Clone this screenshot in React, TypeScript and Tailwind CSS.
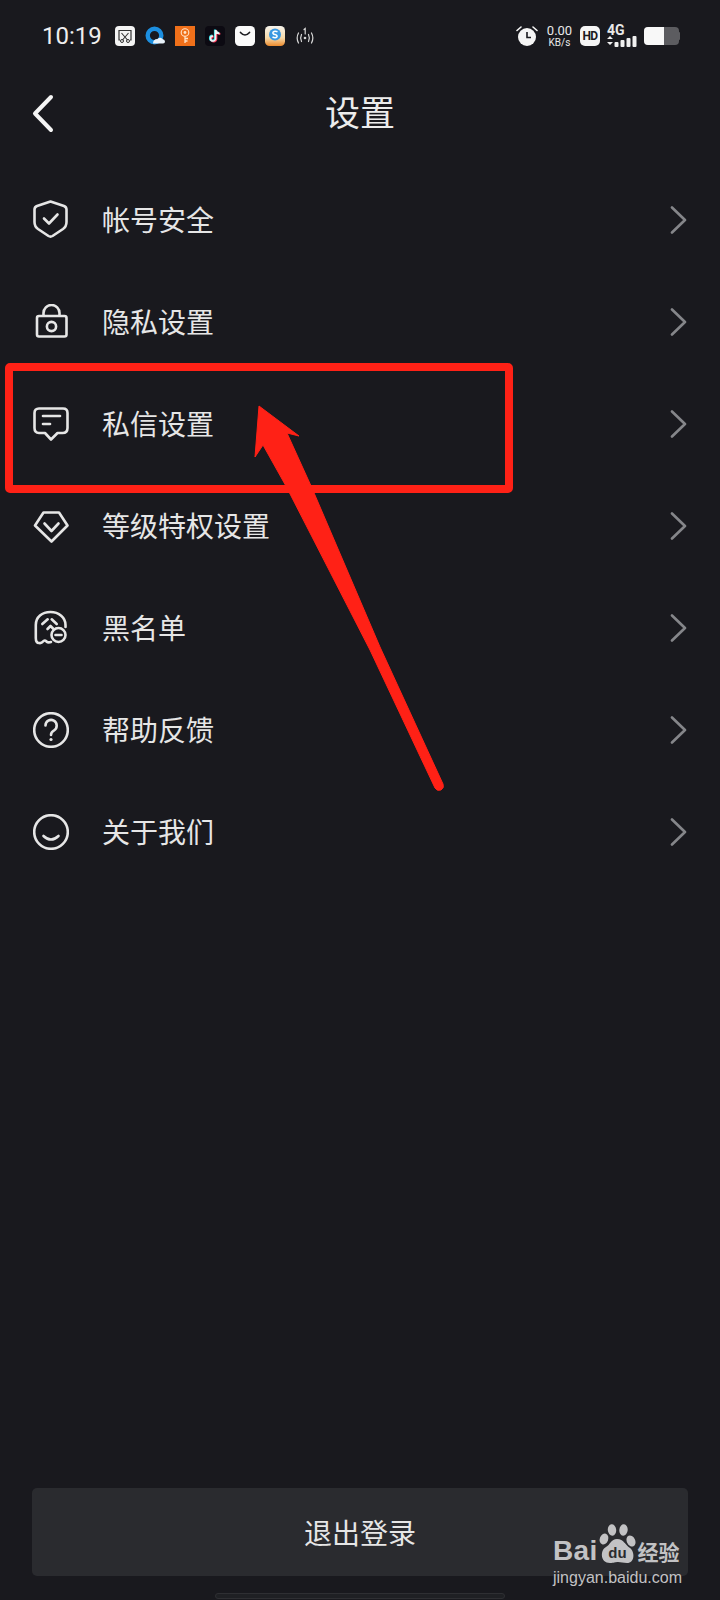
const cjk = "font-['Noto_Sans_CJK_SC','Noto_Sans',sans-serif]"

function ShieldIcon() {
  return (
    <svg viewBox="0 0 36 36" className="h-9 w-9 overflow-visible" fill="none" stroke="#e6e6e6" strokeWidth="2.6" strokeLinejoin="round" strokeLinecap="round">
      <path d="M17.5 -0.5 L31 4 Q33.5 5 33.5 7.5 V20 Q33.5 24.5 30 27 L19.5 34 Q17.5 35.2 15.5 34 L5 27 Q1.5 24.5 1.5 20 V7.5 Q1.5 5 4 4 Z" />
      <path d="M11 16.5 L16 21.5 L24.5 12.5" />
    </svg>
  )
}

function LockIcon() {
  return (
    <svg viewBox="0 0 36 36" className="h-9 w-9" fill="none" stroke="#e6e6e6" strokeWidth="2.6" strokeLinejoin="round">
      <rect x="4" y="12" width="29.5" height="20.5" rx="2" />
      <path d="M10.5 12 V9 a8 8 0 0 1 16 0 V12" />
      <circle cx="18.5" cy="22.5" r="4.6" />
    </svg>
  )
}

function MessageIcon() {
  return (
    <svg viewBox="0 0 36 36" className="h-9 w-9" fill="none" stroke="#e6e6e6" strokeWidth="2.6" strokeLinejoin="round" strokeLinecap="round">
      <path d="M6 2.5 H30 Q34.5 2.5 34.5 7 V22 Q34.5 27 29.5 27 H24.5 L18 33.5 L12 27 H6 Q1.5 27 1.5 22 V7 Q1.5 2.5 6 2.5 Z" />
      <path d="M10 10 H27" />
      <path d="M10 18 H17" />
    </svg>
  )
}

function DiamondIcon() {
  return (
    <svg viewBox="0 0 36 36" className="h-9 w-9" fill="none" stroke="#e6e6e6" strokeWidth="2.6" strokeLinejoin="round" strokeLinecap="round">
      <path d="M10.5 4.5 H26 L34.5 17.5 L18.5 33.5 L2 17.5 Z" />
      <path d="M11.5 15.5 L18.5 23 L25.5 15.5" />
    </svg>
  )
}

function GhostIcon() {
  return (
    <svg viewBox="0 0 36 36" className="h-9 w-9" fill="none" stroke="#e6e6e6" strokeWidth="2.6" strokeLinejoin="round" strokeLinecap="round">
      <path d="M18 32 Q15 33 13.5 31.5 Q11.5 29.5 10 31.5 Q8.5 33.5 6 33 Q2.8 33 2.8 28 V15 C2.8 7 9 2 17.5 2 C26 2 32.5 7.5 32.5 15 V17" />
      <path d="M9.3 14 L14.7 9.3" />
      <path d="M18.7 9.3 L23.7 14" />
      <path d="M14.5 19 L17.5 16 L20 18.5" />
      <circle cx="25.5" cy="25" r="7" fill="#19191e" />
      <path d="M22.5 25 H28.5" />
    </svg>
  )
}

function HelpIcon() {
  return (
    <svg viewBox="0 0 36 36" className="h-9 w-9" fill="none" stroke="#e6e6e6" strokeWidth="2.6" strokeLinecap="round">
      <circle cx="18" cy="18" r="16.8" />
      <path d="M12.5 13.5 a5.6 5.6 0 1 1 8.6 4.8 Q18 20 18 23" />
      <circle cx="18" cy="27.5" r="1.6" fill="#e6e6e6" stroke="none" />
    </svg>
  )
}

function SmileIcon() {
  return (
    <svg viewBox="0 0 36 36" className="h-9 w-9" fill="none" stroke="#e6e6e6" strokeWidth="2.6" strokeLinecap="round">
      <circle cx="18" cy="18" r="16.8" />
      <path d="M10.5 22 Q18 29 25.5 22" />
    </svg>
  )
}

const rows = [
  { label: '帐号安全', icon: <ShieldIcon /> },
  { label: '隐私设置', icon: <LockIcon /> },
  { label: '私信设置', icon: <MessageIcon /> },
  { label: '等级特权设置', icon: <DiamondIcon /> },
  { label: '黑名单', icon: <GhostIcon /> },
  { label: '帮助反馈', icon: <HelpIcon /> },
  { label: '关于我们', icon: <SmileIcon /> },
]

function NotifIcons() {
  return (
    <div className="ml-[13px] flex items-center gap-[10px]">
      {/* screenshot app */}
      <svg viewBox="0 0 20 20" className="h-5 w-5">
        <rect width="20" height="20" rx="4" fill="#f4f4f4" />
        <path d="M5 14 H4 V4.5 H16 V14 H15" fill="none" stroke="#333" strokeWidth="1.2" />
        <path d="M6.5 7 L12.5 14 M13.5 7 L7.5 14" stroke="#333" strokeWidth="1.1" />
        <circle cx="7" cy="15" r="1.5" fill="none" stroke="#333" strokeWidth="1" />
        <circle cx="13" cy="15" r="1.5" fill="none" stroke="#333" strokeWidth="1" />
      </svg>
      {/* browser */}
      <svg viewBox="0 0 20 20" className="h-5 w-5">
        <circle cx="9.5" cy="9.5" r="6.8" fill="none" stroke="#1c8fe0" strokeWidth="4.4" />
        <path d="M8 17.5 Q8 13 12.5 13 Q15 10.5 17.5 13 Q20 13.5 20 15.5 Q20 17.5 18 17.5 H8 Z" fill="#e8f2fa" />
      </svg>
      {/* key */}
      <svg viewBox="0 0 20 20" className="h-5 w-5">
        <rect width="20" height="20" fill="#f0701a" />
        <circle cx="10" cy="6.5" r="3.8" fill="none" stroke="#ffe3c8" strokeWidth="1.1" />
        <circle cx="10" cy="6.5" r="1.4" fill="#ffe3c8" />
        <path d="M10 10 V17 M10 12.5 H13 M10 15 H12.5" stroke="#ffe3c8" strokeWidth="1.3" fill="none" />
      </svg>
      {/* tiktok */}
      <svg viewBox="0 0 20 20" className="h-5 w-5">
        <rect width="20" height="20" rx="4" fill="#0c0a12" />
        <path d="M10.5 4 V12.5 A2.5 2.5 0 1 1 8 10 M10.5 4 Q11 7 14.5 7.5" fill="none" stroke="#ff3b5c" strokeWidth="2" transform="translate(0.8 0.6)" />
        <path d="M10.5 4 V12.5 A2.5 2.5 0 1 1 8 10 M10.5 4 Q11 7 14.5 7.5" fill="none" stroke="#35e0e8" strokeWidth="2" transform="translate(-0.6 -0.4)" />
        <path d="M10.5 4 V12.5 A2.5 2.5 0 1 1 8 10 M10.5 4 Q11 7 14.5 7.5" fill="none" stroke="#f2f2f2" strokeWidth="1.6" />
      </svg>
      {/* bag */}
      <svg viewBox="0 0 20 20" className="h-5 w-5">
        <rect width="20" height="20" rx="4.5" fill="#fbfbfb" />
        <path d="M5.5 6.5 Q10 11.5 14.5 6.5" fill="none" stroke="#1b1b1f" strokeWidth="1.7" strokeLinecap="round" />
      </svg>
      {/* s app */}
      <svg viewBox="0 0 20 20" className="h-5 w-5">
        <defs>
          <linearGradient id="sapp" x1="0" y1="0" x2="0" y2="1">
            <stop offset="0" stopColor="#f6f4ee" />
            <stop offset="0.6" stopColor="#f6d9a8" />
            <stop offset="1" stopColor="#ec8a2c" />
          </linearGradient>
        </defs>
        <rect width="20" height="20" rx="4.5" fill="url(#sapp)" />
        <circle cx="10" cy="8.5" r="6" fill="#3a98e2" />
        <path d="M12.5 5.8 Q9.5 4.5 8 6.3 Q7.4 8 10 8.5 Q12.6 9.2 12 10.8 Q10.5 12.5 7.5 11" fill="none" stroke="#fff" strokeWidth="1.5" />
      </svg>
      {/* hotspot */}
      <svg viewBox="0 0 20 20" className="h-5 w-5" fill="none" stroke="#d8d8d8" strokeWidth="1.2" strokeLinecap="round">
        <circle cx="10" cy="12" r="1.3" fill="#d8d8d8" stroke="none" />
        <path d="M6.5 8.5 Q4.8 12 6.5 15.5 M13.5 8.5 Q15.2 12 13.5 15.5" />
        <path d="M3.5 7 Q0.8 12 3.5 17 M16.5 7 Q19.2 12 16.5 17" />
        <path d="M9 3.5 L10.2 2.5 V8" />
      </svg>
    </div>
  )
}

function SystemIcons() {
  return (
    <div className="mr-[40px] flex items-center font-['Roboto',sans-serif] text-[#e8e8e8]">
      {/* alarm */}
      <svg viewBox="0 0 22 22" className="h-[22px] w-[22px]">
        <circle cx="11" cy="12" r="9" fill="#f5f5f5" />
        <path d="M11 7 V12.5 H15" fill="none" stroke="#1a1a1f" strokeWidth="1.6" />
        <path d="M1 5.5 L5 2 M21 5.5 L17 2" stroke="#f5f5f5" strokeWidth="1.6" strokeLinecap="round" />
      </svg>
      <div className="ml-[9px] flex w-[25px] flex-col items-center leading-none">
        <span className="text-[13px] leading-[12px]">0.00</span>
        <span className="mt-[1px] text-[10px] leading-[10px]">KB/s</span>
      </div>
      <div className="ml-[8px] flex h-[20px] w-[20px] items-center justify-center rounded-[5px] bg-[#f5f5f5] text-[12px] font-bold tracking-tighter text-[#1a1a1f]">
        HD
      </div>
      <div className="ml-[7px] flex flex-col">
        <span className="text-[14px] font-bold leading-[11px]">4G</span>
        <svg viewBox="0 0 32 11" className="h-[11px] w-[32px]" fill="#f0f0f0">
          <path d="M0 3 L3 0 L6 3 Z M0 6 L3 9 L6 6 Z" />
          <rect x="7.5" y="6" width="4" height="5" rx="1" />
          <rect x="13.5" y="4" width="4" height="7" rx="1" />
          <rect x="19.5" y="2" width="4" height="9" rx="1" />
          <rect x="25.5" y="0" width="4" height="11" rx="1" />
        </svg>
      </div>
      <div className="ml-[5px] flex h-[18px] w-[35px] overflow-hidden rounded-[4px] bg-[#5c5c60]">
        <div className="h-full w-[20px] bg-[#f8f8f8]" />
      </div>
      <div className="h-[8px] w-[1px] rounded-r bg-[#5c5c60]" />
    </div>
  )
}

function Watermark() {
  return (
    <div className="absolute left-[553px] top-[1523px] flex w-[130px] flex-col text-[#c2c2c4]">
      <div className="flex h-[41px] items-end">
        <span className="font-['Liberation_Sans',sans-serif] text-[28px] font-bold leading-[26px] tracking-[0.3px]">Bai</span>
        <svg viewBox="0 0 40 40" className="h-[40px] w-[40px] shrink-0">
          <ellipse cx="15" cy="6" rx="4.2" ry="5.8" fill="#c2c2c4" transform="rotate(-5 15 6)" />
          <ellipse cx="26.5" cy="6" rx="4.2" ry="5.8" fill="#c2c2c4" transform="rotate(5 26.5 6)" />
          <ellipse cx="7" cy="15" rx="4.2" ry="5.6" fill="#c2c2c4" transform="rotate(20 7 15)" />
          <ellipse cx="34" cy="17" rx="4.2" ry="5.8" fill="#c2c2c4" transform="rotate(-25 34 17)" />
          <path d="M20 15 C14 15 13 21 9 23 C3 26 3 39 13 39 C17 39 18 38 21 38 C24 38 26 39 30 39 C38 39 38 28 33 24 C28 21 27 15 20 15 Z" fill="#c2c2c4" />
          <text x="20.5" y="34" textAnchor="middle" fontSize="15" fontWeight="700" fill="#2a2b2f" fontFamily="Liberation Sans">du</text>
        </svg>
        <span className={`${cjk} text-[21px] font-bold leading-[26px]`}>经验</span>
      </div>
      <span className="mt-[4px] whitespace-nowrap font-['Liberation_Sans',sans-serif] text-[16px] leading-[20px]">jingyan.baidu.com</span>
    </div>
  )
}

export default function App() {
  return (
    <div className={`relative flex h-[1600px] w-[720px] flex-col overflow-hidden bg-[#19191e] ${cjk}`}>
      <div className="flex h-[72px] items-center justify-between">
        <div className="flex items-center pl-[42px]">
          <span className="font-['Roboto',sans-serif] text-[24px] text-[#eeeeee]">10:19</span>
          <NotifIcons />
        </div>
        <SystemIcons />
      </div>

      <div className="relative flex h-[82px] items-center justify-center">
        <svg viewBox="0 0 24 40" className="absolute left-[31px] top-[22px] h-[40px] w-[24px]" fill="none" stroke="#f5f5f5" strokeWidth="4" strokeLinecap="round" strokeLinejoin="round">
          <path d="M20 3 L4 19.5 L20 36" />
        </svg>
        <span className="pb-[4px] text-[35px] text-[#ececec]">设置</span>
      </div>

      <div className="mt-[15px] flex flex-col">
        {rows.map((row) => (
          <div key={row.label} className="flex h-[102px] items-center pl-[33px] pr-[33px]">
            {row.icon}
            <span className="ml-[33px] flex-1 pb-[2px] text-[28px] text-[#e6e6e6]">{row.label}</span>
            <svg viewBox="0 0 17 28" className="h-[28px] w-[17px]" fill="none" stroke="#85868a" strokeWidth="2.6" strokeLinecap="round" strokeLinejoin="round">
              <path d="M2 1.5 L15 14 L2 26.5" />
            </svg>
          </div>
        ))}
      </div>

      <div className="mx-[32px] mt-auto flex h-[88px] items-center justify-center rounded-[5px] bg-[#2a2b2f] text-[28px] text-[#e6e6e6]">
        退出登录
      </div>
      <div className="mx-auto mb-px mt-[17px] h-[6px] w-[290px] rounded-full border border-[#2e2f33] bg-[#1f2024]" />

      {/* annotation drawn over the screenshot */}
      <div className="absolute left-[5px] top-[363px] h-[130px] w-[508px] rounded-[5px] border-[8px] border-[#ff2116]" />
      <svg viewBox="0 0 720 1600" className="pointer-events-none absolute left-0 top-0 h-[1600px] w-[720px]">
        <path
          d="M259 406 L299 436 L287 433 L311.5 487 L380 647 L443 784 Q444.5 788 441 790 Q437 791.5 435 788 L370 650 L286.5 487 L263 445 L255 457 Z"
          fill="#ff2116"
          stroke="#ff2116"
          strokeWidth="1"
          strokeLinejoin="round"
        />
      </svg>

      <Watermark />
    </div>
  )
}
